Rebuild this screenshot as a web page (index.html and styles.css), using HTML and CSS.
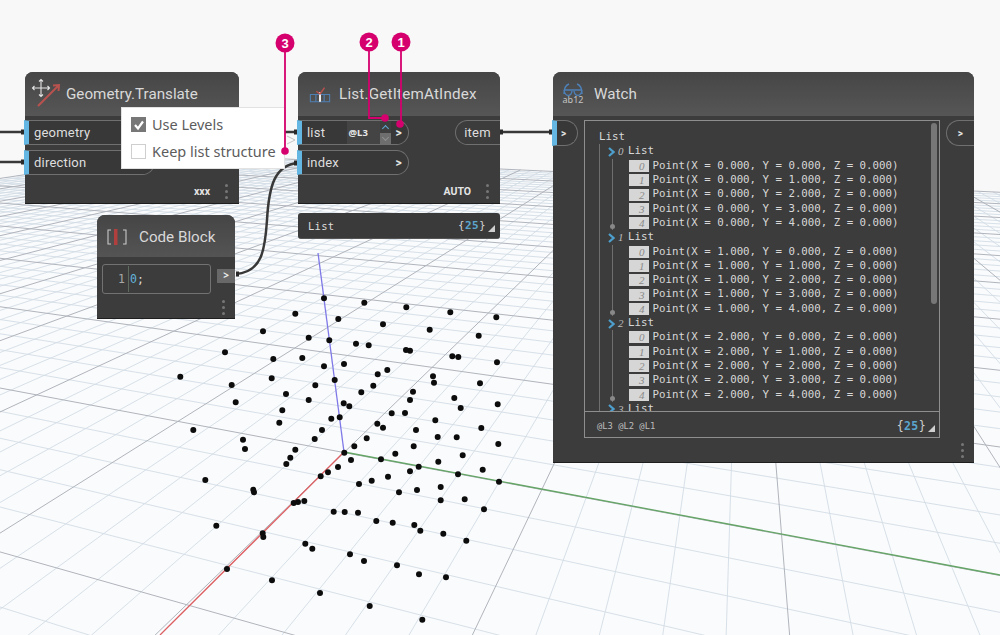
FILE: index.html
```html
<!DOCTYPE html>
<html lang="en">
<head>
<meta charset="utf-8">
<title>Dynamo list levels</title>
<link rel="stylesheet" href="styles.css">
</head>
<body>
<main class="stage">
  <svg id="grid" class="layer" width="1000" height="635" viewBox="0 0 1000 635"></svg>

  <svg class="layer" width="1000" height="635" viewBox="0 0 1000 635">
    <path class="axis-z" d="M318 253 344 452"/>
    <path class="axis-x" d="M344 452 160 635"/>
    <path class="axis-y" d="M344 452 1000 575"/>
    <path class="dots" d="M324 298.3h0M364.3 302.7h0M406.3 307.3h0M450.3 312.3h0M496.3 317.3h0M295.3 313.7h0M338.3 319h0M383 324.3h0M429.7 329.7h0M478.7 335.7h0M263 331.3h0M308.7 337.7h0M329.3 340.3h0M356 343.7h0M368.7 345.3h0M406 350h0M410 350.7h0M452.3 356.3h0M458.3 357h0M497 362.3h0M225 352.3h0M273.3 359h0M302.3 358h0M324 366.3h0M344 364h0M387.3 370h0M377.7 374.3h0M433 376.3h0M434 382.7h0M480 383.3h0M180.3 376.7h0M231.7 385h0M271.7 378.3h0M315.3 385.3h0M334.7 380h0M373.3 385.7h0M361.3 392.3h0M413 391.7h0M410 400h0M454.3 398h0M460.7 408h0M497.7 404.3h0M235.7 402.3h0M286 394h0M308.7 400h0M343.7 403.3h0M349.3 406.3h0M282.3 410.3h0M391.7 413.3h0M405 413h0M339.7 417.3h0M331.3 418.7h0M279.3 422.7h0M435.3 420.3h0M377.3 423.7h0M383 427.7h0M481.3 428h0M416 430h0M322 430h0M193.3 430h0M243 439.7h0M314.7 439h0M366.7 438.3h0M437.7 437h0M456.7 437.3h0M498.3 444h0M354.3 446.3h0M413.7 446.3h0M245 449h0M295.3 449.7h0M344.3 452.7h0M395.3 453.7h0M462.7 455.3h0M290.3 457.7h0M351 460h0M381 459.3h0M438.3 461.7h0M286.3 464h0M338 467h0M418.7 466.7h0M410 471.3h0M482.7 469.7h0M328 472.3h0M458 474.3h0M320.7 476.3h0M388 476.7h0M205.3 480h0M371.7 480.7h0M499 481.7h0M359 484h0M253.3 489.7h0M254 492.3h0M417 490h0M440.7 487h0M399 492.3h0M293.7 503h0M298 502h0M304.3 501h0M440.7 500.3h0M464.7 499.3h0M484 509.3h0M333.7 511.7h0M344.7 512h0M358 512.7h0M376.3 521h0M392.7 522.7h0M414.3 525h0M420.3 530.7h0M443.3 533.7h0M466.3 540.7h0M216.3 525.7h0M262.7 533.3h0M263.3 537h0M305.3 543.7h0M312.3 548.7h0M350 554.3h0M364 561h0M397 565.3h0M419 574.3h0M446 577.3h0M227 569h0M272 580.3h0M320 593h0M369.7 606h0M422.3 619.7h0"/>
    <path class="wire" d="M0 132H25M0 162H25M285 132H298M500 132H553M236 274C262 272 265 250 267 220 269 185 275 165 298 163"/>
    <path class="nub" d="M21 132H25M21 162H25M294 132H298M294 163H298M500 132H503M549 132H553M236 274H239"/>
  </svg>

  <article class="node node-geo">
    <header class="head">
      <svg class="icon" width="36" height="36" viewBox="0 0 36 36">
        <path class="ic-move" d="M11 4.500V21.500M2.500 13H19.500M9 6.500 11 4.500 13 6.500M9 19.500 11 21.500 13 19.500M4.500 11 2.500 13 4.500 15M17.500 11 19.500 13 17.500 15"/>
        <path class="ic-red" d="M8 31 28 11M23 10.500 29 10 28.500 16"/>
      </svg>
      <h2 class="title">Geometry.Translate</h2>
    </header>
    <div class="body">
      <div class="ports">
        <div class="port port-in port-geo"><span>geometry</span></div>
        <div class="port port-in port-geo"><span>direction</span></div>
      </div>
    </div>
    <footer class="foot"><span class="lacing">xxx</span><span class="kebab"><i></i><i></i><i></i></span></footer>
  </article>

  <article class="node node-code">
    <header class="head head-code">
      <svg class="icon" width="20" height="16" viewBox="0 0 20 16">
        <path class="ic-bracket" d="M4 1H1V15H4M16 1H19V15H16"/>
        <rect class="ic-redbar" x="7" y="0" width="3.500" height="16"/>
      </svg>
      <h2 class="title">Code Block</h2>
    </header>
    <div class="code-body">
      <div class="code-box"><span class="ln">1</span><span class="code"><b>0</b>;</span></div>
      <div class="code-out">&gt;</div>
    </div>
    <footer class="foot foot-code"><span class="kebab"><i></i><i></i><i></i></span></footer>
  </article>

  <article class="node node-get">
    <header class="head">
      <svg class="icon" width="22" height="22" viewBox="0 0 24 24">
        <path class="ic-blue" d="M1.500 12.500H7.500V20.500H1.500ZM16.500 12.500H22.500V20.500H16.500ZM7.500 12.500H16.500V20.500H7.500Z"/>
        <path class="ic-white" d="M12 10V20.500"/>
        <path class="ic-red-thin" d="M8 9 12 12 17 5"/>
      </svg>
      <h2 class="title">List.GetItemAtIndex</h2>
    </header>
    <div class="body">
      <div class="ports">
        <div class="port port-in port-get">
          <span class="port-name">list</span>
          <span class="level">@L3</span>
          <span class="spin"><i class="spin-up"></i><i class="spin-down"></i></span>
          <span class="arrow">&gt;</span>
        </div>
        <div class="port port-in port-get">
          <span class="port-name">index</span>
          <span class="arrow">&gt;</span>
        </div>
      </div>
      <div class="port port-out port-item"><span>item</span></div>
    </div>
    <footer class="foot"><span class="lacing">AUTO</span><span class="kebab"><i></i><i></i><i></i></span></footer>
  </article>

  <div class="preview">
    <span class="mono">List</span>
    <span class="count">{<b>25</b>}</span>
    <i class="corner"></i>
  </div>

  <article class="node node-watch">
    <header class="head">
      <div class="watch-icon">
        <svg width="20" height="15" viewBox="0 0 20 15">
          <path class="ic-glass" d="M1 11C1 5 3 2 6 1M19 11C19 5 17 2 14 1M1 7H19M1 7C2 14 8 14 9 8M19 7C18 14 12 14 11 8"/>
        </svg>
        <span class="ab12">ab12</span>
      </div>
      <h2 class="title">Watch</h2>
    </header>
    <div class="watch-body">
      <div class="port port-in port-watch"><span class="arrow">&gt;</span></div>
      <section class="panel">
        <div class="scrollbar"></div>
        <div class="tree">
          <div class="t-root">List</div>
          <div class="t-outer">
            <div class="t-head"><svg class="chev" width="7" height="10" viewBox="0 0 7 10"><path d="M1 1 5.500 5 1 9"/></svg><em>0</em><span>List</span></div>
            <ul class="t-items">
              <li><em>0</em><span>Point(X = 0.000, Y = 0.000, Z = 0.000)</span></li>
              <li><em>1</em><span>Point(X = 0.000, Y = 1.000, Z = 0.000)</span></li>
              <li><em>2</em><span>Point(X = 0.000, Y = 2.000, Z = 0.000)</span></li>
              <li><em>3</em><span>Point(X = 0.000, Y = 3.000, Z = 0.000)</span></li>
              <li><em>4</em><span>Point(X = 0.000, Y = 4.000, Z = 0.000)</span></li>
            </ul>
            <div class="t-head"><svg class="chev" width="7" height="10" viewBox="0 0 7 10"><path d="M1 1 5.500 5 1 9"/></svg><em>1</em><span>List</span></div>
            <ul class="t-items">
              <li><em>0</em><span>Point(X = 1.000, Y = 0.000, Z = 0.000)</span></li>
              <li><em>1</em><span>Point(X = 1.000, Y = 1.000, Z = 0.000)</span></li>
              <li><em>2</em><span>Point(X = 1.000, Y = 2.000, Z = 0.000)</span></li>
              <li><em>3</em><span>Point(X = 1.000, Y = 3.000, Z = 0.000)</span></li>
              <li><em>4</em><span>Point(X = 1.000, Y = 4.000, Z = 0.000)</span></li>
            </ul>
            <div class="t-head"><svg class="chev" width="7" height="10" viewBox="0 0 7 10"><path d="M1 1 5.500 5 1 9"/></svg><em>2</em><span>List</span></div>
            <ul class="t-items">
              <li><em>0</em><span>Point(X = 2.000, Y = 0.000, Z = 0.000)</span></li>
              <li><em>1</em><span>Point(X = 2.000, Y = 1.000, Z = 0.000)</span></li>
              <li><em>2</em><span>Point(X = 2.000, Y = 2.000, Z = 0.000)</span></li>
              <li><em>3</em><span>Point(X = 2.000, Y = 3.000, Z = 0.000)</span></li>
              <li><em>4</em><span>Point(X = 2.000, Y = 4.000, Z = 0.000)</span></li>
            </ul>
            <div class="t-head"><svg class="chev" width="7" height="10" viewBox="0 0 7 10"><path d="M1 1 5.500 5 1 9"/></svg><em>3</em><span>List</span></div>
          </div>
        </div>
        <div class="panel-foot">
          <span class="levels">@L3 @L2 @L1</span>
          <span class="count">{<b>25</b>}</span>
          <i class="corner"></i>
        </div>
      </section>
      <div class="port port-out port-watch-out"><span class="arrow">&gt;</span></div>
    </div>
    <footer class="foot foot-watch"><span class="kebab"><i></i><i></i><i></i></span></footer>
  </article>

  <div class="menu">
    <label class="opt"><span class="box box-on"><svg width="14" height="14" viewBox="0 0 14 14"><path d="M3 7 6 10.500 11 3.500"/></svg></span>Use Levels</label>
    <label class="opt"><span class="box"></span>Keep list structure</label>
  </div>
  <svg class="ghost" width="10" height="10" viewBox="0 0 10 10"><path d="M1 1 9 5 1 9"/></svg>

  <svg class="layer callouts" width="1000" height="635" viewBox="0 0 1000 635">
    <path class="lead" d="M285 43V151M369 42V118H385M401 42V124"/>
    <circle class="pin" cx="285" cy="151" r="3.800"/>
    <circle class="pin" cx="385" cy="118" r="3.800"/>
    <circle class="pin" cx="400" cy="124" r="3.800"/>
    <circle class="pin" cx="285" cy="43" r="9.500"/>
    <circle class="pin" cx="369" cy="42" r="9.500"/>
    <circle class="pin" cx="401" cy="42" r="9.500"/>
    <text class="pin-num" x="285" y="47.500">3</text>
    <text class="pin-num" x="369" y="46.500">2</text>
    <text class="pin-num" x="401" y="46.500">1</text>
  </svg>
</main>
<script src="grid.js"></script>
</body>
</html>
```
FILE: styles.css
```css
* { box-sizing: border-box; }
html, body { margin: 0; padding: 0; }
body { width: 1000px; height: 635px; overflow: hidden; background: #f8f8f8; font-family: "Noto Sans", "Open Sans", sans-serif; }
.stage { position: relative; width: 1000px; height: 635px; overflow: hidden; background: #f8f8f8; }
.layer { position: absolute; left: 0; top: 0; }
.callouts { pointer-events: none; }

/* viewport */
.gfloor { fill: #fafbfc; }
.gminor { stroke: #d2dce5; stroke-width: .9; fill: none; }
.gmajor { stroke: #b0b4bc; stroke-width: 1; fill: none; }
.axis-z, .axis-x, .axis-y { fill: none; stroke-width: 1.300; }
.axis-z { stroke: #7f79e8; }
.axis-x { stroke: #dc5f62; }
.axis-y { stroke: #64a566; }
.dots { fill: none; stroke: #0c0c0c; stroke-width: 6; stroke-linecap: round; }
.wire { fill: none; stroke: #383838; stroke-width: 2.500; }
.nub { fill: none; stroke: #2a2a2a; stroke-width: 5; }

/* nodes */
.node { position: absolute; display: flex; flex-direction: column; background: #3c3c3c; border-radius: 8px 8px 0 0; border-bottom: 1px solid #1e1e1e; color: #e0e0e0; }
.node-geo { left: 25px; top: 72px; width: 214px; height: 132px; }
.node-get { left: 298px; top: 72px; width: 202px; height: 132px; }
.node-code { left: 97px; top: 215px; width: 138px; height: 104px; }
.node-watch { left: 553px; top: 72px; width: 421px; height: 391px; }

.head { flex: none; height: 44px; display: flex; align-items: center; gap: 8px; padding-left: 12px; background: linear-gradient(#464646, #565656); border-radius: 8px 8px 0 0; }
.head-code { height: 42px; padding: 1px 0 0 10px; gap: 12px; background: linear-gradient(#454545, #545454); }
.title { margin: 0; font-family: Roboto, "Noto Sans", sans-serif; font-size: 15.200px; font-weight: 400; color: #d9d9d9; white-space: nowrap; }
.icon { flex: none; }
.node-geo .head { padding-left: 5px; gap: 5px; }
.node-geo .title { margin-left: -5px; }
.node-geo .icon { margin-top: -2px; }
.node-get .head { gap: 8px; padding-left: 11px; }
.node-get .title { letter-spacing: .2px; }

.ic-move { fill: none; stroke: #e4e4e4; stroke-width: 1.100; }
.ic-red { fill: none; stroke: #b8524e; stroke-width: 2; }
.ic-blue { fill: none; stroke: #4f7fb2; stroke-width: 1.200; }
.ic-glass { fill: none; stroke: #4d80b8; stroke-width: 1.400; }
.ic-white { fill: none; stroke: #eee; stroke-width: 2.200; }
.ic-red-thin { fill: none; stroke: #b8524e; stroke-width: 1.600; }
.ic-bracket { fill: none; stroke: #c9c9c9; stroke-width: 1.100; }
.ic-redbar { fill: #b03f3e; }

.body { flex: 1; display: flex; justify-content: space-between; align-items: flex-start; padding-top: 4px; min-height: 0; }
.ports { display: flex; flex-direction: column; gap: 5px; }
.port { display: flex; align-items: center; height: 25px; font-family: Roboto, "Noto Sans", sans-serif; font-size: 13px; letter-spacing: .2px; color: #dedede; }
.port-in { border: 1px solid #707070; border-left: 5px solid #63b7e2; border-radius: 0 14px 14px 0; padding-left: 5px; margin-left: -1px; background: #383838; }
.port-geo { width: 131px; }
.port-get { width: 112px; padding-right: 6px; }
.port-name { flex: 1; }
.port-out { border: 1px solid #707070; border-right: 0; border-radius: 14px 0 0 14px; }
.port-item { width: 45px; justify-content: center; padding-right: 1px; }
.arrow { font-size: 12px; font-weight: 700; color: #e4e4e4; }
.level { align-self: stretch; display: flex; align-items: center; width: 33px; padding-left: 2px; background: #444; font-family: "Noto Sans", sans-serif; font-size: 9.500px; letter-spacing: 0; font-weight: 700; color: #e8e8e8; }
.spin { align-self: stretch; display: flex; flex-direction: column; width: 11px; margin-right: 5px; }
.spin-up { flex: 1; position: relative; background: #3e3e3e; }
.spin-up::after { content: ""; position: absolute; left: 3px; top: 5px; width: 4px; height: 4px; border-left: 1.500px solid #5fa8cf; border-top: 1.500px solid #5fa8cf; transform: rotate(45deg); }
.spin-down { flex: 1; position: relative; background: #6e6e6e; }
.spin-down::after { content: ""; position: absolute; left: 3px; top: 2px; width: 4px; height: 4px; border-right: 1.500px solid #909090; border-bottom: 1.500px solid #909090; transform: rotate(45deg); }

.foot { flex: none; display: flex; justify-content: flex-end; align-items: center; gap: 15px; height: 24px; padding: 0 10px 0 0; }
.lacing { font-family: Roboto, sans-serif; font-size: 10.500px; font-weight: 700; color: #e4e4e4; }
.kebab { display: flex; flex-direction: column; gap: 3px; padding-right: 1px; }
.kebab i { display: block; width: 3px; height: 3px; border-radius: 50%; background: #777; }

/* code block */
.code-body { flex: 1; display: flex; align-items: flex-start; justify-content: space-between; padding: 7px 0 0 5px; }
.code-box { width: 109px; height: 30px; display: flex; align-items: center; border: 1px solid #727272; border-radius: 3px; font-family: "DejaVu Sans Mono", monospace; font-size: 11.500px; color: #d8d8d8; }
.ln { width: 26px; text-align: right; padding-right: 3px; color: #a8a8a8; border-right: 1px solid #5d6a5d; height: 26px; line-height: 26px; }
.code { padding-left: 1px; }
.code b { font-weight: 400; color: #64b5dd; }
.code-out { width: 18px; height: 14px; margin-top: 5px; background: #686868; color: #eee; font-size: 10px; font-weight: 700; line-height: 13px; text-align: center; }
.foot-code { height: 26px; padding-right: 9px; }

/* preview bubble */
.preview { position: absolute; left: 298px; top: 213px; width: 202px; height: 26px; display: flex; align-items: center; padding: 0 5px 0 10px; border-radius: 3px; background: #3a3a3a; border-bottom: 1px solid #555; color: #ddd; }
.mono { flex: 1; font-family: "DejaVu Sans Mono", monospace; font-size: 10.500px; letter-spacing: .3px; }
.count { font-family: "DejaVu Sans Mono", monospace; font-size: 11px; color: #cfcfcf; letter-spacing: .4px; }
.count b { font-weight: 700; color: #5ba6cf; }
.corner { width: 0; height: 0; margin: 5px 0 0 2px; border-style: solid; border-width: 0 0 7px 7px; border-color: transparent transparent #cfcfcf transparent; }

/* watch */
.watch-icon { position: relative; width: 20px; height: 23px; display: flex; flex-direction: column; align-items: center; }
.ab12 { font-size: 9px; line-height: 9px; color: #c4c4c4; margin-top: -3px; }
.node-watch .head { gap: 11px; padding-left: 10px; }
.watch-body { flex: 1; display: flex; align-items: flex-start; padding-top: 4px; min-height: 0; }
.port-watch { width: 26px; justify-content: flex-start; padding-left: 4px; flex: none; height: 26px; }
.port-watch .arrow, .port-watch-out .arrow { font-size: 10px; }
.panel { position: relative; width: 356px; height: 318px; margin-left: 6px; display: flex; flex-direction: column; border: 1.500px solid #8e8e8e; }
.scrollbar { position: absolute; right: 2px; top: 2px; width: 6px; height: 181px; background: #777; border-radius: 3px; }
.tree { flex: 1; min-height: 0; overflow: hidden; padding: 9.200px 0 0 14px; font-family: "DejaVu Sans Mono", monospace; font-size: 10.750px; line-height: 14.300px; color: #d8d8d8; }
.t-root { height: 14.300px; }
.t-outer { border-left: 1px solid #6f6f6f; padding-left: 8px; }
.t-head { display: flex; align-items: center; height: 14.300px; }
.t-head em { width: 13px; padding-left: 3px; font-style: italic; font-family: "Liberation Serif", serif; font-size: 11px; color: #bbb; }
.chev { flex: none; margin-top: 1px; }
.chev path { fill: none; stroke: #4d9fce; stroke-width: 2.200; }
.t-items { position: relative; list-style: none; margin: 0 0 0 4px; padding: 0 0 0 15.500px; border-left: 1px solid #6f6f6f; }
.t-items::after { content: ""; position: absolute; left: -3px; bottom: 1px; width: 5px; height: 5px; border-radius: 50%; background: #888; }
.t-items li { display: flex; align-items: center; height: 14.300px; gap: 4px; white-space: nowrap; }
.t-items em { flex: none; width: 20px; height: 12px; padding-right: 4px; background: #d6d6d6; color: #8a8a8a; font-family: "Liberation Serif", serif; font-style: italic; font-size: 11px; line-height: 12px; text-align: right; }
.panel-foot { flex: none; height: 26px; display: flex; align-items: center; padding: 2px 4px 0 12px; border-top: 1.500px solid #8e8e8e; background: #3c3c3c; }
.panel-foot .count { font-size: 11.500px; }
.levels { flex: 1; font-family: "DejaVu Sans Mono", monospace; font-size: 8.800px; color: #bdbdbd; }
.port-watch-out { width: 28px; flex: none; margin-left: 6px; justify-content: center; height: 26px; }
.foot-watch { height: 23px; padding-right: 9px; }

/* context menu */
.menu { position: absolute; left: 121px; top: 107px; width: 164px; height: 62px; display: flex; flex-direction: column; gap: 6px; padding: 5.500px 0 0 8.500px; background: #fff; border: 1px solid #e2e2e2; color: #5c5c5c; font-size: 14.500px; }
.opt { display: flex; align-items: center; height: 21px; gap: 6.500px; white-space: nowrap; }
.box { flex: none; width: 15px; height: 15px; border: 1px solid #cfcfcf; background: #fff; }
.box-on { background: #777; border-color: #777; }
.box svg { display: block; margin: 0; }
.box svg path { fill: none; stroke: #fff; stroke-width: 2.200; }
.ghost { position: absolute; left: 286px; top: 135px; }
.ghost path { fill: none; stroke: #c4c4c4; stroke-width: 1; }

/* callouts */
.lead { fill: none; stroke: #d5006e; stroke-width: 1.800; }
.pin { fill: #d5006e; }
.pin-num { fill: #fff; font-family: "Liberation Sans", sans-serif; font-size: 13px; font-weight: 700; text-anchor: middle; }
```
FILE: grid.js
```js
// Perspective ground grid of the 3D viewport: projects grid units to the screen.
(function () {
  var NS = "http://www.w3.org/2000/svg";
  var svg = document.getElementById("grid");
  var XMIN = -45, YMIN = -50, MAX = 50, MINW = 0.12;
  function w(x, y) { return 1 - 0.0565 * x - 0.0175 * y; }
  function project(x, y) {
    var d = w(x, y);
    return [344 + (-22.6 * x + 36.1 * y) / d, 452.5 + (21.84 * x + 6.77 * y) / d];
  }
  function add(cls, a, b) {
    var l = document.createElementNS(NS, "line");
    l.setAttribute("class", cls);
    l.setAttribute("x1", a[0].toFixed(1));
    l.setAttribute("y1", a[1].toFixed(1));
    l.setAttribute("x2", b[0].toFixed(1));
    l.setAttribute("y2", b[1].toFixed(1));
    svg.appendChild(l);
  }
  function lastInFront(fn, lo) {
    var t = MAX;
    while (t > lo && fn(t) < MINW) t -= 0.25;
    return t;
  }
  var floor = document.createElementNS(NS, "polygon");
  var c = [project(XMIN, YMIN), project(XMIN, MAX), project(12, 15), project(12, YMIN)];
  floor.setAttribute("points", c.map(function (p) { return p[0].toFixed(1) + "," + p[1].toFixed(1); }).join(" "));
  floor.setAttribute("class", "gfloor");
  svg.appendChild(floor);
  for (var pass = 0; pass < 2; pass++) {
    for (var i = -50; i <= MAX; i++) {
      var major = i % 5 === 0;
      if (major !== (pass === 1)) continue;
      var cls = major ? "gmajor" : "gminor";
      (function (k) {
        var t;
        if (k >= XMIN) {
          t = lastInFront(function (v) { return w(k, v); }, YMIN);
          if (t > YMIN) add(cls, project(k, YMIN), project(k, t));
        }
        t = lastInFront(function (v) { return w(v, k); }, XMIN);
        if (t > XMIN) add(cls, project(XMIN, k), project(t, k));
      })(i);
    }
  }
})();
```
